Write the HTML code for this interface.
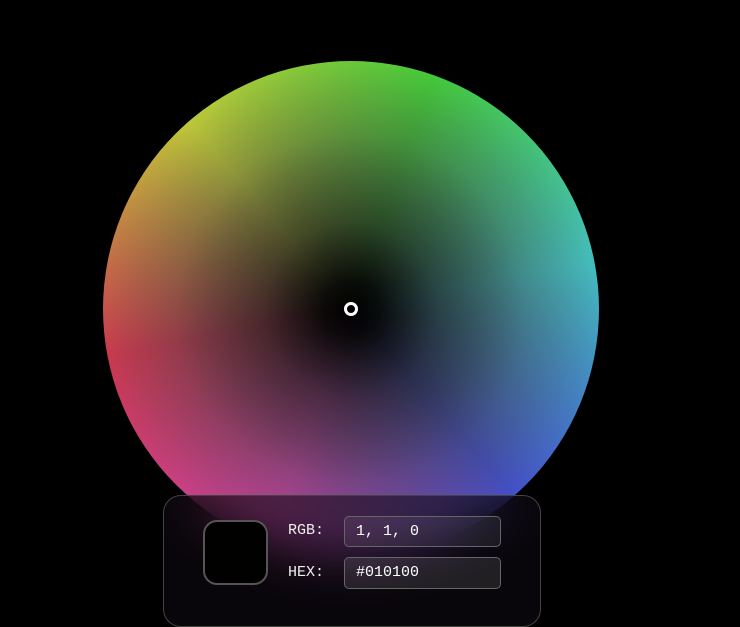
<!DOCTYPE html>
<html><head><style>
html,body{margin:0;padding:0;background:#000;width:740px;height:599px;overflow:hidden;font-family:"Liberation Mono",monospace;}
.wheel{position:absolute;left:103px;top:61px;width:496px;height:496px;border-radius:50%;
background:radial-gradient(circle,#000 0%,rgba(0,0,0,0.92) 8%,rgba(0,0,0,0.6) 25%,rgba(0,0,0,0.28) 50%,rgba(0,0,0,0.05) 80%,rgba(0,0,0,0) 100%),
radial-gradient(circle,rgba(128,128,128,0.7) 0%,rgba(128,128,128,0.5) 40%,rgba(128,128,128,0.12) 80%,rgba(128,128,128,0) 97%),
conic-gradient(from 19deg,#40ff30,#40f0f0 60deg,#4050ff 120deg,#ff40d0 180deg,#ff3050 240deg,#f0ff30 300deg,#40ff30 360deg);}
.marker{position:absolute;left:344px;top:302px;width:8px;height:8px;border:3px solid #fff;border-radius:50%;background:#000;}
.panel{position:absolute;left:163px;top:495px;width:376px;height:130px;border:1px solid #444;border-radius:18px;
background:rgba(15,10,18,0.6);backdrop-filter:blur(24px);-webkit-backdrop-filter:blur(24px);}
.sw{position:absolute;left:203px;top:520px;width:61px;height:61px;border:2px solid #555;border-radius:14px;background:#010100;}
.lbl{position:absolute;left:288px;color:#eee;font-size:15px;}
.inp{position:absolute;left:344px;height:29px;border:1px solid #666;border-radius:5px;background:rgba(255,255,255,0.07);color:#fff;font-size:15px;line-height:29px;padding-left:11px;box-sizing:border-box;width:157px;}
</style></head><body>
<div class="wheel"></div>
<div class="marker"></div>
<div class="panel"></div>
<div class="sw"></div>
<div class="lbl" style="top:522px">RGB:</div>
<div class="inp" style="top:516px;height:31px">1, 1, 0</div>
<div class="lbl" style="top:564px">HEX:</div>
<div class="inp" style="top:557px;height:32px;background:rgba(255,255,255,0.1)">#010100</div>
</body></html>
